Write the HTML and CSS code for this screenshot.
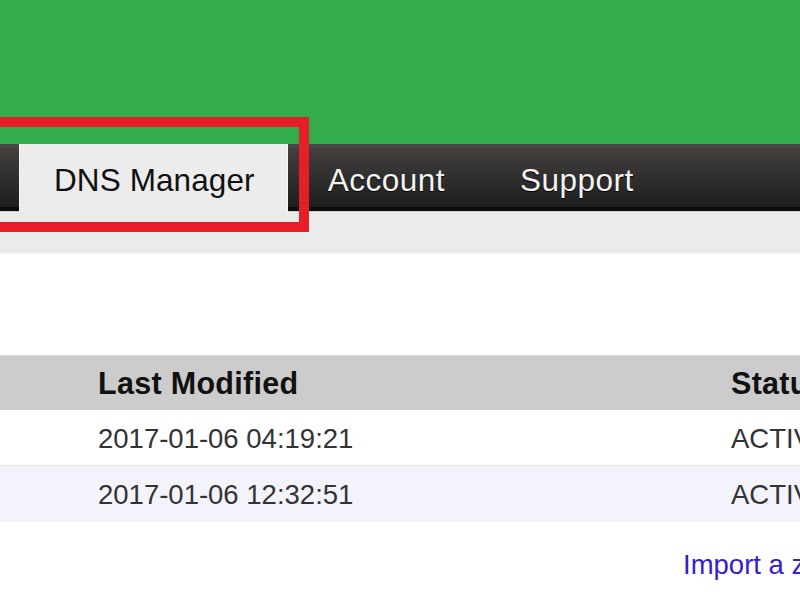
FILE: index.html
```html
<!DOCTYPE html>
<html lang="en">
<head>
<meta charset="utf-8">
<title>DNS Manager</title>
<link rel="stylesheet" href="styles.css">
</head>
<body>
  <header class="brand"></header>

  <nav class="topnav">
    <ul class="tabs">
      <li class="tab tab-active"><a href="#">DNS Manager</a></li>
      <li class="tab"><a href="#">Account</a></li>
      <li class="tab"><a href="#">Support</a></li>
    </ul>
  </nav>
  <div class="subnav"></div>

  <!-- highlight drawn round the current tab -->
  <div class="callout"></div>

  <main class="content">
    <table class="zones">
      <thead>
        <tr>
          <th class="col-modified">Last Modified</th>
          <th class="col-status">Status</th>
        </tr>
      </thead>
      <tbody>
        <tr>
          <td class="col-modified">2017-01-06 04:19:21</td>
          <td class="col-status">ACTIVE</td>
        </tr>
        <tr class="alt">
          <td class="col-modified">2017-01-06 12:32:51</td>
          <td class="col-status">ACTIVE</td>
        </tr>
      </tbody>
    </table>
    <div class="actions">
      <a class="import-link" href="#">Import a zone</a>
    </div>
  </main>
</body>
</html>
```

FILE: styles.css
```css
html, body {
  margin: 0;
  padding: 0;
  background: #ffffff;
  overflow: hidden;
}

body {
  font-family: "Liberation Sans", Arial, sans-serif;
  color: #333333;
  width: 800px;
  height: 600px;
  position: relative;
}

/* green brand band */
.brand {
  height: 144px;
  background: #33ad4c;
}

/* dark navigation bar */
.topnav {
  height: 68px;
  background: linear-gradient(to bottom,
    #4a4847 0, #4a4847 4px,
    #43403e 4px, #1e1e1e 63px,
    #0b0b0b 63px, #0b0b0b 67px,
    #cfcfcf 67px, #cfcfcf 68px);
}

.tabs {
  list-style: none;
  margin: 0;
  padding: 0 0 0 20px;
  height: 100%;
  display: flex;
  gap: 7px;
}

.tab {
  display: flex;
  align-items: center;
}

.tab a {
  display: block;
  padding: 4px 34px 0 34px;
  font-size: 31.5px;
  letter-spacing: 0.5px;
  color: #f4f4f4;
  text-decoration: none;
  text-shadow: 0 1px 1px #000000;
  line-height: 64px;
}

.tab-active {
  background: #ececec;
  box-shadow: -1px 0 0 #f6f6f6, 1px 0 0 #f6f6f6;
}

.tab-active a {
  color: #111111;
  text-shadow: none;
  letter-spacing: 0.1px;
  padding-right: 32px;
}

.subnav {
  height: 41px;
  background: #ebebeb;
  border-bottom: 1px solid #f3f3f3;
}

.callout {
  position: absolute;
  left: -10px;
  top: 117px;
  width: 299px;
  height: 95px;
  border: 10px solid #e61e28;
}

.content {
  padding-top: 101px;
  width: 1100px;
}

.zones {
  border-collapse: collapse;
  width: 100%;
}

.zones th,
.zones td {
  text-align: left;
  padding: 0;
  white-space: nowrap;
}

.zones th {
  height: 54px;
  background: #cccccc;
  border-top: 1px solid #dedede;
  color: #111111;
  font-weight: bold;
  font-size: 30.5px;
  letter-spacing: 0.3px;
}

.zones td {
  height: 52px;
  padding-top: 3px;
  font-size: 27.5px;
  color: #333333;
  border-bottom: 1px solid #e6e6e6;
}

.zones tr.alt td {
  background: #f3f3fb;
  border-bottom: 1px solid #f7f7f7;
}

.col-modified {
  width: 633px;
  padding-left: 98px !important;
}

.col-status {
  padding-left: 0;
}

.actions {
  padding: 27px 0 0 683px;
}

.import-link {
  font-size: 27.5px;
  color: #3420cf;
  text-decoration: none;
  line-height: 32px;
}
```
